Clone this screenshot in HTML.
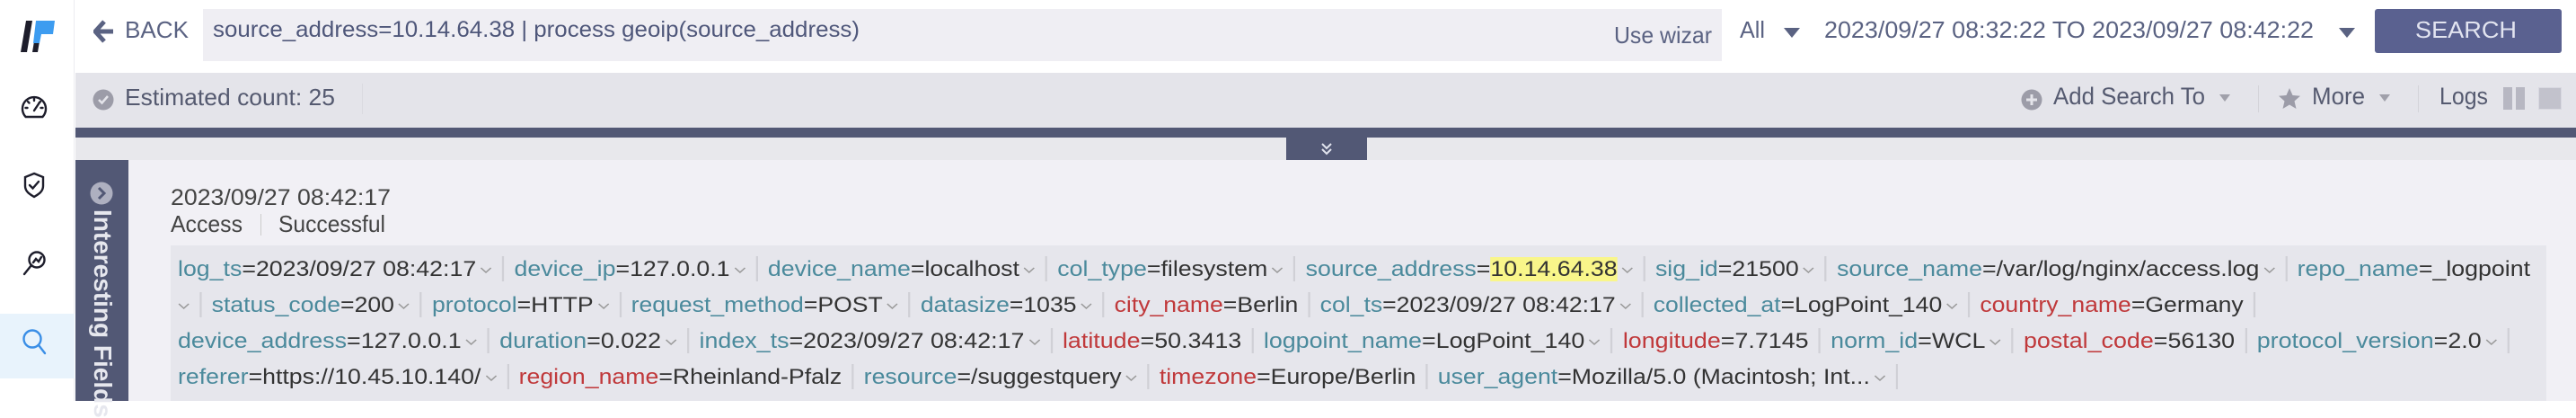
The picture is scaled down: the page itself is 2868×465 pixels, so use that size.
<!DOCTYPE html>
<html><head><meta charset="utf-8"><style>
*{margin:0;padding:0;box-sizing:border-box}
body{width:2868px;height:446px;overflow:hidden;background:#fff;font-family:"Liberation Sans",sans-serif;position:relative}
.a{position:absolute}
.f{position:absolute;white-space:nowrap;line-height:1;transform-origin:0 0;display:inline-block}
.k{color:#4b8a9c}.r{color:#c0393b}.v{color:#333}
.b{display:inline-block;width:2px;height:28px;background:#d0d0d6;margin:0 10px;vertical-align:-6px}
.c{display:inline-block;margin-left:4px;vertical-align:2px}
</style></head><body>
<!-- sidebar -->
<div class="a" style="left:0;top:0;width:83px;height:446px;background:#fff;border-right:1px solid #ececf0"></div>
<svg class="a" style="left:0;top:0" width="83" height="446">
<polygon points="29,23 36,23 30,58 23,58" fill="#1d1d2b"/>
<polygon points="39,40 45,40 42,58 36,58" fill="#1d1d2b"/>
<polygon points="40,23 61,23 59,38 46,38 44,48 37,48" fill="#3d9cf0"/>
<g fill="none" stroke="#1d1d2b" stroke-width="2.4" stroke-linecap="round">
<path d="M28.6 130 A13 13 0 1 1 47.4 130 Z"/><path d="M38 123 L44 114"/><path d="M38 110v2M31 113l1.5 1.5M45 113l-1.5 1.5M28.5 120h2M45.5 120h2"/>
<path d="M38 193 L48 197 V207 C48 213 43 216 38 219 C33 216 28 213 28 207 V197 Z"/><path d="M33 206 l3.5 3.5 L43 202"/>
<circle cx="41" cy="289" r="8.5"/><path d="M35 295 L27 305"/><path d="M37 292 l3 -4 l3 3 l3 -5"/>
</g>
</svg>
<div class="a" style="left:0;top:349px;width:83px;height:72px;background:#e8f3fc"></div>
<svg class="a" style="left:0;top:349px" width="83" height="72"><g fill="none" stroke="#3a8ee6" stroke-width="2.4" stroke-linecap="round"><circle cx="36" cy="28" r="9.5"/><path d="M43 35 L50 44"/></g></svg>

<!-- top bar -->
<svg class="a" style="left:104px;top:22px" width="24" height="26"><path d="M12 2 L2 13 L12 24 M3 13 H22" stroke="#5a6282" stroke-width="5" fill="none" stroke-linejoin="round"/></svg>
<div class="f" style="left:139px;top:19.6px;font-size:26px;color:#5a6282;--w:71px">BACK</div>
<div class="a" style="left:226px;top:10px;width:1691px;height:58px;background:#efeef3"></div>
<div class="f" style="left:237px;top:20.7px;font-size:25px;color:#4f577a;--w:720px">source_address=10.14.64.38 | process geoip(source_address)</div>
<div class="f" style="left:1797px;top:25.6px;font-size:26px;color:#5a6282;--w:109px">Use wizar</div>
<div class="f" style="left:1937px;top:20px;font-size:26px;color:#5a6282;--w:28px">All</div>
<svg class="a" style="left:1986px;top:31px" width="18" height="11"><path d="M0 0H18L9 11Z" fill="#5a6282"/></svg>
<div class="f" style="left:2031px;top:20px;font-size:26px;color:#5a6282;--w:545px">2023/09/27 08:32:22 TO 2023/09/27 08:42:22</div>
<svg class="a" style="left:2604px;top:31px" width="18" height="11"><path d="M0 0H18L9 11Z" fill="#5a6282"/></svg>
<div class="a" style="left:2644px;top:10px;width:208px;height:49px;background:#5a6190;border-radius:3px"></div>
<div class="f" style="left:2689px;top:20px;font-size:26px;color:#e2e4f0;--w:113px">SEARCH</div>

<!-- toolbar -->
<div class="a" style="left:84px;top:81px;width:2784px;height:61px;background:#e4e4ea"></div>
<svg class="a" style="left:103px;top:99px" width="24" height="24"><circle cx="12" cy="12" r="11.5" fill="#9c9ca8"/><path d="M7 12l3.5 3.5L17 8" stroke="#e4e4ea" stroke-width="2.5" fill="none"/></svg>
<div class="f" style="left:139px;top:94.6px;font-size:26px;color:#555a70;--w:234px">Estimated count: 25</div>
<div class="a" style="left:403px;top:93px;width:1px;height:34px;background:#dadae0"></div>
<svg class="a" style="left:2250px;top:99px" width="24" height="24"><circle cx="12" cy="12" r="11.5" fill="#9c9ca8"/><path d="M12 6v12M6 12h12" stroke="#e4e4ea" stroke-width="3"/></svg>
<div class="f" style="left:2286px;top:94px;font-size:27px;color:#555a70;--w:169px">Add Search To</div>
<svg class="a" style="left:2471px;top:105px" width="12" height="8"><path d="M0 0H12L6 8Z" fill="#a0a0aa"/></svg>
<div class="a" style="left:2514px;top:95px;width:1px;height:30px;background:#d4d4da"></div>
<svg class="a" style="left:2536px;top:97px" width="26" height="26"><path d="M13 1l3.5 8 8.5.8-6.5 5.7 2 8.5L13 19.5 5.5 24l2-8.5L1 9.8l8.5-.8z" fill="#9c9ca8"/></svg>
<div class="f" style="left:2574px;top:94px;font-size:27px;color:#555a70;--w:59px">More</div>
<svg class="a" style="left:2649px;top:105px" width="12" height="8"><path d="M0 0H12L6 8Z" fill="#a0a0aa"/></svg>
<div class="a" style="left:2692px;top:95px;width:1px;height:30px;background:#d4d4da"></div>
<div class="f" style="left:2716px;top:94px;font-size:27px;color:#555a70;--w:54px">Logs</div>
<div class="a" style="left:2787px;top:97px;width:10px;height:25px;background:#b7b7c2"></div>
<div class="a" style="left:2801px;top:97px;width:10px;height:25px;background:#b7b7c2"></div>
<div class="a" style="left:2826px;top:97px;width:26px;height:25px;background:#c2c2cc;border:1px solid #d8d8e0"></div>

<!-- stripe -->
<div class="a" style="left:84px;top:142px;width:2784px;height:11px;background:#525875"></div>
<div class="a" style="left:84px;top:153px;width:2784px;height:25px;background:#e8e8ec"></div>
<div class="a" style="left:1432px;top:153px;width:90px;height:25px;background:#525875"></div>
<svg class="a" style="left:1470px;top:158px" width="14" height="15"><path d="M2 2l5 5 5-5M2 8l5 5 5-5" stroke="#e2e4ee" stroke-width="2" fill="none"/></svg>

<!-- content -->
<div class="a" style="left:84px;top:178px;width:2784px;height:268px;background:#f1f0f5"></div>
<div class="a" style="left:84px;top:178px;width:59px;height:268px;background:#525875"></div>
<svg class="a" style="left:100px;top:202px" width="26" height="26"><circle cx="13" cy="13" r="12.5" fill="#aeb0c0"/><path d="M10 7l6 6-6 6" stroke="#525875" stroke-width="3" fill="none"/></svg>
<div class="a" style="left:98px;top:233px;width:32px;writing-mode:vertical-rl;font-weight:bold;font-size:28px;line-height:32px;color:#e6e7ee;white-space:nowrap">Interesting Fields</div>

<div class="f" style="left:190px;top:207.7px;font-size:25px;color:#444;--w:245px">2023/09/27 08:42:17</div>
<div class="f" style="left:190px;top:235.6px;font-size:26px;color:#444;--w:80px">Access</div>
<div class="a" style="left:290px;top:238px;width:1px;height:24px;background:#ccc"></div>
<div class="f" style="left:310px;top:235.6px;font-size:26px;color:#444;--w:119px">Successful</div>

<div class="a" style="left:190px;top:273px;width:2645px;height:173px;background:#e6e6ec"></div>

<div class="f" style="left:198px;top:285px;font-size:24px;--w:2619px"><span class="k">log_ts</span><span class="v">=2023/09/27 08:42:17</span><svg class="c" width="12" height="8"><path d="M1 1l5 5 5-5" stroke="#999" fill="none" stroke-width="1.4"/></svg><span class="b"></span><span class="k">device_ip</span><span class="v">=127.0.0.1</span><svg class="c" width="12" height="8"><path d="M1 1l5 5 5-5" stroke="#999" fill="none" stroke-width="1.4"/></svg><span class="b"></span><span class="k">device_name</span><span class="v">=localhost</span><svg class="c" width="12" height="8"><path d="M1 1l5 5 5-5" stroke="#999" fill="none" stroke-width="1.4"/></svg><span class="b"></span><span class="k">col_type</span><span class="v">=filesystem</span><svg class="c" width="12" height="8"><path d="M1 1l5 5 5-5" stroke="#999" fill="none" stroke-width="1.4"/></svg><span class="b"></span><span class="k">source_address</span><span class="v">=<span style="background:#f9f68a">10.14.64.38</span></span><svg class="c" width="12" height="8"><path d="M1 1l5 5 5-5" stroke="#999" fill="none" stroke-width="1.4"/></svg><span class="b"></span><span class="k">sig_id</span><span class="v">=21500</span><svg class="c" width="12" height="8"><path d="M1 1l5 5 5-5" stroke="#999" fill="none" stroke-width="1.4"/></svg><span class="b"></span><span class="k">source_name</span><span class="v">=/var/log/nginx/access.log</span><svg class="c" width="12" height="8"><path d="M1 1l5 5 5-5" stroke="#999" fill="none" stroke-width="1.4"/></svg><span class="b"></span><span class="k">repo_name</span><span class="v">=_logpoint</span></div>

<div class="f" style="left:198px;top:325px;font-size:24px;--w:2313px"><svg class="c" style="margin-left:0" width="12" height="8"><path d="M1 1l5 5 5-5" stroke="#999" fill="none" stroke-width="1.4"/></svg><span class="b"></span><span class="k">status_code</span><span class="v">=200</span><svg class="c" width="12" height="8"><path d="M1 1l5 5 5-5" stroke="#999" fill="none" stroke-width="1.4"/></svg><span class="b"></span><span class="k">protocol</span><span class="v">=HTTP</span><svg class="c" width="12" height="8"><path d="M1 1l5 5 5-5" stroke="#999" fill="none" stroke-width="1.4"/></svg><span class="b"></span><span class="k">request_method</span><span class="v">=POST</span><svg class="c" width="12" height="8"><path d="M1 1l5 5 5-5" stroke="#999" fill="none" stroke-width="1.4"/></svg><span class="b"></span><span class="k">datasize</span><span class="v">=1035</span><svg class="c" width="12" height="8"><path d="M1 1l5 5 5-5" stroke="#999" fill="none" stroke-width="1.4"/></svg><span class="b"></span><span class="r">city_name</span><span class="v">=Berlin</span><span class="b"></span><span class="k">col_ts</span><span class="v">=2023/09/27 08:42:17</span><svg class="c" width="12" height="8"><path d="M1 1l5 5 5-5" stroke="#999" fill="none" stroke-width="1.4"/></svg><span class="b"></span><span class="k">collected_at</span><span class="v">=LogPoint_140</span><svg class="c" width="12" height="8"><path d="M1 1l5 5 5-5" stroke="#999" fill="none" stroke-width="1.4"/></svg><span class="b"></span><span class="r">country_name</span><span class="v">=Germany</span><span class="b" style="margin-right:0"></span></div>

<div class="f" style="left:198px;top:365px;font-size:24px;--w:2596px"><span class="k">device_address</span><span class="v">=127.0.0.1</span><svg class="c" width="12" height="8"><path d="M1 1l5 5 5-5" stroke="#999" fill="none" stroke-width="1.4"/></svg><span class="b"></span><span class="k">duration</span><span class="v">=0.022</span><svg class="c" width="12" height="8"><path d="M1 1l5 5 5-5" stroke="#999" fill="none" stroke-width="1.4"/></svg><span class="b"></span><span class="k">index_ts</span><span class="v">=2023/09/27 08:42:17</span><svg class="c" width="12" height="8"><path d="M1 1l5 5 5-5" stroke="#999" fill="none" stroke-width="1.4"/></svg><span class="b"></span><span class="r">latitude</span><span class="v">=50.3413</span><span class="b"></span><span class="k">logpoint_name</span><span class="v">=LogPoint_140</span><svg class="c" width="12" height="8"><path d="M1 1l5 5 5-5" stroke="#999" fill="none" stroke-width="1.4"/></svg><span class="b"></span><span class="r">longitude</span><span class="v">=7.7145</span><span class="b"></span><span class="k">norm_id</span><span class="v">=WCL</span><svg class="c" width="12" height="8"><path d="M1 1l5 5 5-5" stroke="#999" fill="none" stroke-width="1.4"/></svg><span class="b"></span><span class="r">postal_code</span><span class="v">=56130</span><span class="b"></span><span class="k">protocol_version</span><span class="v">=2.0</span><svg class="c" width="12" height="8"><path d="M1 1l5 5 5-5" stroke="#999" fill="none" stroke-width="1.4"/></svg><span class="b" style="margin-right:0"></span></div>

<div class="f" style="left:198px;top:405px;font-size:24px;--w:1915px"><span class="k">referer</span><span class="v">=https://10.45.10.140/</span><svg class="c" width="12" height="8"><path d="M1 1l5 5 5-5" stroke="#999" fill="none" stroke-width="1.4"/></svg><span class="b"></span><span class="r">region_name</span><span class="v">=Rheinland-Pfalz</span><span class="b"></span><span class="k">resource</span><span class="v">=/suggestquery</span><svg class="c" width="12" height="8"><path d="M1 1l5 5 5-5" stroke="#999" fill="none" stroke-width="1.4"/></svg><span class="b"></span><span class="r">timezone</span><span class="v">=Europe/Berlin</span><span class="b"></span><span class="k">user_agent</span><span class="v">=Mozilla/5.0 (Macintosh; Int...</span><svg class="c" width="12" height="8"><path d="M1 1l5 5 5-5" stroke="#999" fill="none" stroke-width="1.4"/></svg><span class="b" style="margin-right:0"></span></div>

<script>
document.querySelectorAll('.f').forEach(function(e){var w=parseFloat(e.style.getPropertyValue('--w'));var s=e.getBoundingClientRect().width;if(w&&s)e.style.transform='scaleX('+(w/s)+')';});
</script>
</body></html>
